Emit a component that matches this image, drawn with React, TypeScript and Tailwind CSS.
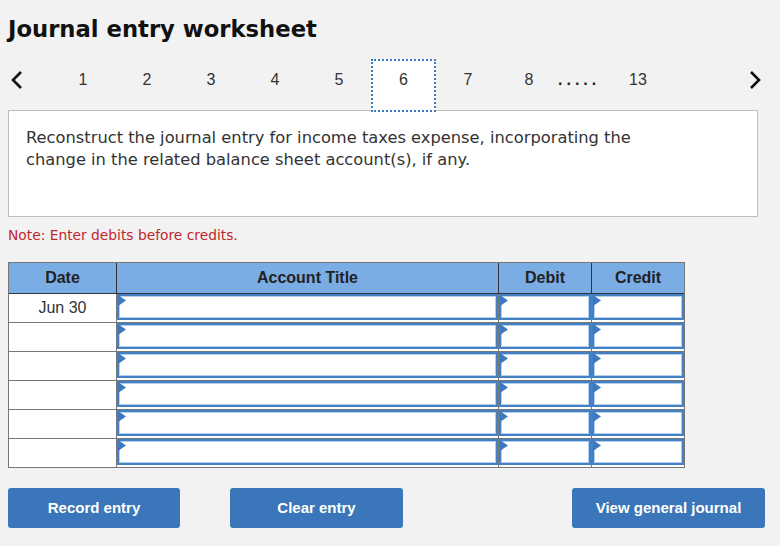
import React from "react";

const pages = [1, 2, 3, 4, 5, 6, 7];

function Chevron({ dir }: { dir: "left" | "right" }) {
  return (
    <svg width="14" height="20" viewBox="0 0 14 20" aria-hidden>
      <polyline
        points={dir === "left" ? "11,2 3,10 11,18" : "3,2 11,10 3,18"}
        fill="none"
        stroke="#111"
        strokeWidth="2.6"
      />
    </svg>
  );
}

function EntryInput() {
  return (
    <div className="relative h-[26px] border-2 border-[#4480c4] bg-white shadow-[inset_0_0_0_1px_#b3cfee]">
      <svg
        className="absolute left-[-1px] top-[-1px]"
        width="8"
        height="11"
        viewBox="0 0 8 11"
        aria-hidden
      >
        <polygon points="0,0 8,5.5 0,11" fill="#3c79bf" />
      </svg>
    </div>
  );
}

export default function App() {
  const rows = ["Jun 30", "", "", "", "", ""];

  return (
    <div className="min-h-[546px] w-[780px] bg-[#f2f2f2] font-['Liberation_Sans',Arial,sans-serif] text-[#333]">
      <h1 className="pl-2 pt-[14px] font-['DejaVu_Sans',Verdana,sans-serif] text-[22.7px] font-bold leading-[30px] text-[#111]">
        Journal entry worksheet
      </h1>

      <div className="relative z-10 mt-[15px] flex h-[53px] items-start text-[16px] leading-[18px]">
        <div className="flex w-[51px] items-center pl-[10px] pt-[11px]">
          <Chevron dir="left" />
        </div>
        {pages.map((p) =>
          p === 6 ? (
            <div
              key={p}
              className="flex h-[53px] w-[65px] justify-center border-2 border-dotted border-[#3b78c0] bg-white pt-[10px]"
            >
              {p}
            </div>
          ) : (
            <div key={p} className="flex w-[64px] justify-center pt-[12px]">
              {p}
            </div>
          )
        )}
        <div className="flex w-[58px] justify-center pt-[12px]">8</div>
        <div className="w-[46px] pt-[12px] font-bold tracking-[4px] text-[#222]">.....</div>
        <div className="flex w-[68px] justify-center pt-[12px]">13</div>
        <div className="ml-auto flex pr-[18px] pt-[11px]">
          <Chevron dir="right" />
        </div>
      </div>

      <div className="mx-2 -mt-[2px] h-[107px] w-[750px] border border-[#bdbdbd] bg-white pl-[17px] pt-[16px] font-['DejaVu_Sans',Verdana,sans-serif] text-[16.3px] leading-[22px] text-[#333]">
        Reconstruct the journal entry for income taxes expense, incorporating the
        <br />
        change in the related balance sheet account(s), if any.
      </div>

      <p className="mt-[9px] pl-2 font-['DejaVu_Sans',Verdana,sans-serif] text-[13.8px] leading-[18px] text-[#c0272d]">
        Note: Enter debits before credits.
      </p>

      <div className="ml-2 mt-[18px] w-[677px] border border-[#777]">
        <div className="grid h-[30px] grid-cols-[107px_382px_93px_93px] bg-[#79ade4] text-[16px] font-bold text-[#222]">
          <div className="flex items-center justify-center">Date</div>
          <div className="flex items-center justify-center border-l border-[#333]">Account Title</div>
          <div className="flex items-center justify-center border-l border-[#333]">Debit</div>
          <div className="flex items-center justify-center border-l border-[#333]">Credit</div>
        </div>
        {rows.map((date, i) => (
          <div
            key={i}
            className={`grid h-[29px] grid-cols-[107px_382px_93px_93px] border-t bg-white ${
              i === 0 ? "border-[#333]" : "border-[#777]"
            }`}
          >
            <div className="flex items-center justify-center text-[16px] text-[#333]">
              {date}
            </div>
            <div className="border-l border-[#777]">
              <EntryInput />
            </div>
            <div className="border-l border-[#777]">
              <EntryInput />
            </div>
            <div className="border-l border-[#777]">
              <EntryInput />
            </div>
          </div>
        ))}
      </div>

      <div className="mt-[20px] flex px-2 text-[15px] font-bold text-white">
        <button className="h-[40px] w-[172px] rounded-[3px] bg-[#3a76b9]">Record entry</button>
        <button className="ml-[50px] h-[40px] w-[173px] rounded-[3px] bg-[#3a76b9]">Clear entry</button>
        <button className="ml-auto mr-[7px] h-[40px] w-[193px] rounded-[3px] bg-[#3a76b9]">
          View general journal
        </button>
      </div>
    </div>
  );
}
